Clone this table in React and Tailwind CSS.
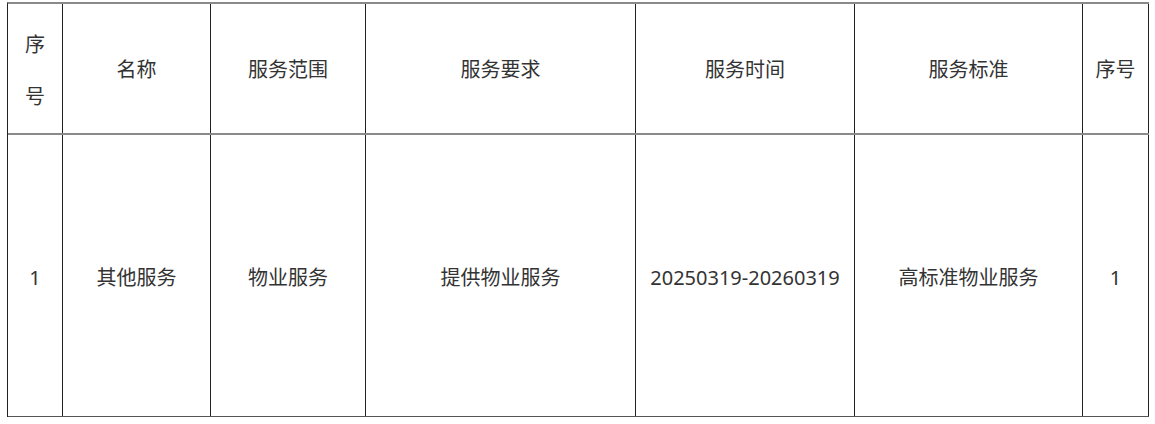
export default function App() {
  const cols = [
    { w: "w-[55px]", h: null, b: "1" },
    { w: "w-[148px]", h: "名称", b: "其他服务" },
    { w: "w-[155px]", h: "服务范围", b: "物业服务" },
    { w: "w-[270px]", h: "服务要求", b: "提供物业服务" },
    { w: "w-[219px]", h: "服务时间", b: "20250319-20260319" },
    { w: "w-[228px]", h: "服务标准", b: "高标准物业服务" },
    { w: "w-[66px]", h: "序号", b: "1" },
  ];
  return (
    <div className="w-[1155px] h-[424px] bg-white pt-[2px] pl-[7px]" style={{ fontFamily: '"Noto Sans", "Noto Sans CJK SC", sans-serif' }}>
      <div className="w-[1142px] border-l border-l-[#222] border-t-2 border-t-[#8a8a8a] text-[#333] text-[20px]">
        <div className="flex h-[131px] border-b-2 border-b-[#8a8a8a]">
          {cols.map((c, i) => (
            <div key={i} className={`${c.w} shrink-0 border-r border-r-[#222] flex items-center justify-center`}>
              {c.h === null ? (
                <div className="flex flex-col items-center gap-[28px] pt-[4px] leading-[24px]">
                  <span>序</span>
                  <span>号</span>
                </div>
              ) : (
                <span className="pt-[2px]">{c.h}</span>
              )}
            </div>
          ))}
        </div>
        <div className="flex h-[282px] border-b border-b-[#555]">
          {cols.map((c, i) => (
            <div key={i} className={`${c.w} shrink-0 border-r border-r-[#222] flex items-center justify-center`}>
              <span className="pt-[5px]">{c.b}</span>
            </div>
          ))}
        </div>
      </div>
    </div>
  );
}
